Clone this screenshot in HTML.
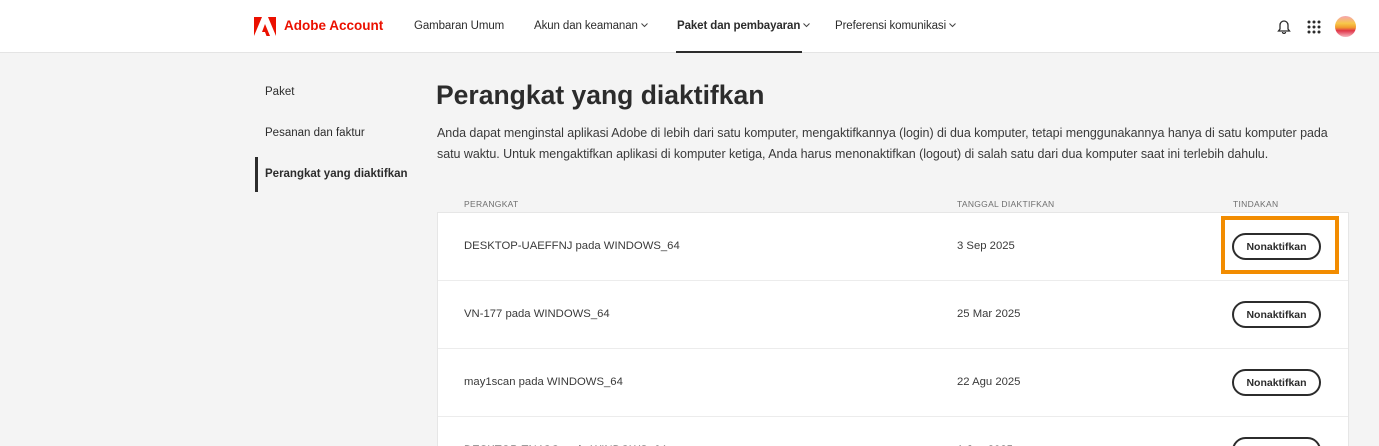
<!DOCTYPE html>
<html><head><meta charset="utf-8"><style>
*{margin:0;padding:0;box-sizing:border-box}
html,body{width:1379px;height:446px;overflow:hidden}
body{background:#f4f4f4;font-family:"Liberation Sans",sans-serif;color:#2c2c2c;position:relative}
.hdr{position:absolute;left:0;top:0;width:1379px;height:53px;background:#fff;border-bottom:1px solid #e4e4e4}
.a{position:absolute;font-size:11.5px;color:#2c2c2c;top:20px;white-space:nowrap;letter-spacing:-.1px}
.a svg{margin-left:3px;vertical-align:1px}
.t{position:absolute;white-space:nowrap}
.card{position:absolute;left:437px;top:212px;width:912px;height:234px;background:#fff;border:1px solid #e6e6e6;border-bottom:none;overflow:hidden}
.row{position:absolute;left:0;width:910px;height:68px;border-bottom:1px solid #ececec}
.row .d{position:absolute;left:26px;top:27px;font-size:11.3px;color:#3a3a3a}
.row .dt{position:absolute;left:519px;top:27px;font-size:11.3px;color:#3a3a3a}
.btn{position:absolute;left:794px;top:20px;width:89px;height:27px;border:2px solid #2c2c2c;border-radius:14px;font-size:10.5px;font-weight:bold;display:flex;align-items:center;justify-content:center;color:#2c2c2c}
.th{position:absolute;top:199px;font-size:8.5px;color:#6e6e6e;letter-spacing:.3px}
</style></head><body>
<div class="hdr">
<svg style="position:absolute;left:254px;top:17px" width="22" height="19" viewBox="0 0 22 19"><path d="M0 0h8L0 19z M14 0h8v19z M11 7l5 12h-3.5l-1.5-4H8z" fill="#eb1000"/></svg>
<div class="t" style="left:284px;top:18px;font-size:13.5px;font-weight:bold;color:#eb1000">Adobe Account</div>
<div class="a" style="left:414px">Gambaran Umum</div>
<div class="a" style="left:534px">Akun dan keamanan<svg width="7" height="5"><path d="M.5.5l3 3 3-3" fill="none" stroke="#444"/></svg></div>
<div class="a" style="left:677px;font-weight:bold">Paket dan pembayaran<svg width="7" height="5"><path d="M.5.5l3 3 3-3" fill="none" stroke="#444"/></svg></div>
<div style="position:absolute;left:676px;top:51px;width:126px;height:2px;background:#2c2c2c"></div>
<div class="a" style="left:835px">Preferensi komunikasi<svg width="7" height="5"><path d="M.5.5l3 3 3-3" fill="none" stroke="#444"/></svg></div>
<svg style="position:absolute;left:1277px;top:19px" width="14" height="15" viewBox="0 0 14 15"><path d="M3 10V6a4 4 0 0 1 8 0v4l1.5 2h-11z M5.5 13a1.5 1.5 0 0 0 3 0" fill="none" stroke="#2c2c2c" stroke-width="1.3"/></svg>
<svg style="position:absolute;left:1307px;top:20px" width="14" height="14"><g fill="#2c2c2c"><circle cx="2" cy="2" r="1.5"/><circle cx="7" cy="2" r="1.5"/><circle cx="12" cy="2" r="1.5"/><circle cx="2" cy="7" r="1.5"/><circle cx="7" cy="7" r="1.5"/><circle cx="12" cy="7" r="1.5"/><circle cx="2" cy="12" r="1.5"/><circle cx="7" cy="12" r="1.5"/><circle cx="12" cy="12" r="1.5"/></g></svg>
<div style="position:absolute;left:1335px;top:16px;width:21px;height:21px;border-radius:50%;background:linear-gradient(#f6a5b0 0,#f7c84a 35%,#f29a2e 55%,#e0354a 70%,#f6b8c0 100%)"></div>
</div>
<div class="t" style="left:265px;top:86px;font-size:11.5px">Paket</div>
<div class="t" style="left:265px;top:127px;font-size:11.5px">Pesanan dan faktur</div>
<div style="position:absolute;left:255px;top:157px;width:3px;height:35px;background:#2c2c2c"></div>
<div class="t" style="left:265px;top:168px;font-size:11.5px;font-weight:bold">Perangkat yang diaktifkan</div>
<div class="t" style="left:436px;top:80px;font-size:26.5px;font-weight:bold;color:#2c2c2c">Perangkat yang diaktifkan</div>
<div style="position:absolute;left:437px;top:123px;width:910px;font-size:12.5px;line-height:21px;color:#3a3a3a;letter-spacing:-.05px">Anda dapat menginstal aplikasi Adobe di lebih dari satu komputer, mengaktifkannya (login) di dua komputer, tetapi menggunakannya hanya di satu komputer pada satu waktu. Untuk mengaktifkan aplikasi di komputer ketiga, Anda harus menonaktifkan (logout) di salah satu dari dua komputer saat ini terlebih dahulu.</div>
<div class="th" style="left:464px">PERANGKAT</div>
<div class="th" style="left:957px">TANGGAL DIAKTIFKAN</div>
<div class="th" style="left:1233px">TINDAKAN</div>
<div class="card">
<div class="row" style="top:0"><div class="d">DESKTOP-UAEFFNJ pada WINDOWS_64</div><div class="dt">3 Sep 2025</div><div class="btn">Nonaktifkan</div></div>
<div class="row" style="top:68px"><div class="d">VN-177 pada WINDOWS_64</div><div class="dt">25 Mar 2025</div><div class="btn">Nonaktifkan</div></div>
<div class="row" style="top:136px"><div class="d">may1scan pada WINDOWS_64</div><div class="dt">22 Agu 2025</div><div class="btn">Nonaktifkan</div></div>
<div class="row" style="top:204px"><div class="d">DESKTOP-TN4CC pada WINDOWS_64</div><div class="dt">1 Jan 2025</div><div class="btn">Nonaktifkan</div></div>
</div>
<div style="position:absolute;left:1221px;top:216px;width:118px;height:58px;border:4px solid #f28c00"></div>
</body></html>
